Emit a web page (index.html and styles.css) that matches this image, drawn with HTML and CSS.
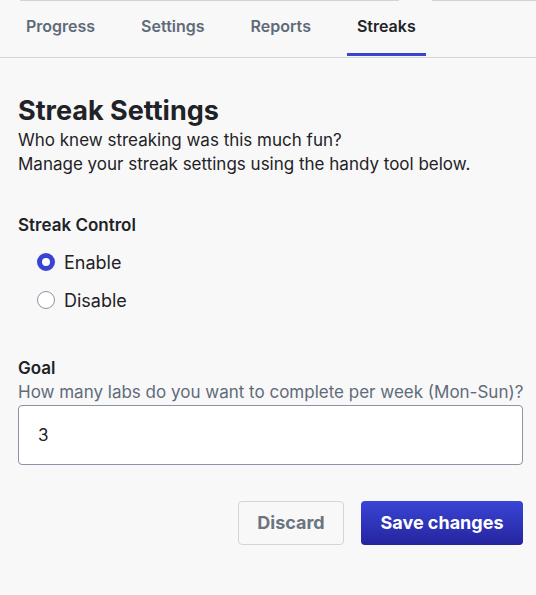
FILE: index.html
```html
<!DOCTYPE html>
<html lang="en">
<head>
  <meta charset="UTF-8">
  <meta name="viewport" content="width=device-width, initial-scale=1.0">
  <title>Streak Settings</title>
  <link rel="stylesheet" href="styles.css">
</head>
<body>
  <div class="top-edge">
    <span class="edge-left"></span>
    <span class="edge-right"></span>
  </div>

  <nav class="tabs">
    <a class="tab" href="#">Progress</a>
    <a class="tab" href="#">Settings</a>
    <a class="tab" href="#">Reports</a>
    <a class="tab active" href="#">Streaks</a>
  </nav>

  <main class="content">
    <h1>Streak Settings</h1>
    <p class="intro">Who knew streaking was this much fun?<br>Manage your streak settings using the handy tool below.</p>

    <section class="field">
      <h2>Streak Control</h2>
      <label class="radio"><input type="radio" name="streak" checked> Enable</label>
      <label class="radio"><input type="radio" name="streak"> Disable</label>
    </section>

    <section class="field goal">
      <h2>Goal</h2>
      <p class="hint">How many labs do you want to complete per week (Mon-Sun)?</p>
      <input class="text-input" type="text" value="3">
    </section>

    <div class="actions">
      <button class="btn btn-secondary">Discard</button>
      <button class="btn btn-primary">Save changes</button>
    </div>
  </main>
</body>
</html>
```

FILE: styles.css
```css
body {
  margin: 0;
  background-color: #f8f8f8;
  font-family: Inter, "Noto Sans", sans-serif;
  color: #1f2226;
}

.top-edge {
  display: flex;
  height: 1px;
}

.edge-left {
  margin-left: 20px;
  width: 379px;
  background: #cfd3de;
}

.edge-right {
  margin-left: 33px;
  flex: 1;
  background: #cfd3de;
}

.tabs {
  display: flex;
  gap: 26px;
  padding: 0 16px;
  border-bottom: 1px solid #d3d5dc;
  margin-top: 12px;
}

.tab {
  padding: 3px 10px 17px;
  border-bottom: 3px solid transparent;
  margin-bottom: 1px;
  font-size: 16px;
  font-weight: 600;
  line-height: 20px;
  color: #5f6b7a;
  text-decoration: none;
}

.tab.active {
  color: #1f2226;
  border-bottom-color: #3a44d0;
}

.content {
  padding: 36px 13px 0 18px;
}

h1 {
  margin: 0;
  font-size: 27px;
  font-weight: 700;
  line-height: 34px;
}

.intro {
  margin: 0;
  font-size: 17px;
  line-height: 24px;
}

.field {
  margin-top: 37px;
}

.field h2 {
  margin: 0 0 6px;
  font-size: 17px;
  font-weight: 600;
  line-height: 24px;
}

.radio {
  display: flex;
  align-items: center;
  gap: 9px;
  margin-left: 19px;
  height: 38px;
  font-size: 18px;
}

.radio input {
  appearance: none;
  box-sizing: border-box;
  margin: 0;
  width: 18px;
  height: 18px;
  border: 1px solid #8a94a4;
  border-radius: 50%;
  background: #fff;
}

.radio input:checked {
  border: 5px solid #3a44d0;
}

.goal {
  margin-top: 37px;
}

.goal h2 {
  margin-bottom: 0;
}

.hint {
  margin: 0 0 1px;
  color: #5f6b7a;
  font-size: 17px;
  line-height: 24px;
  white-space: nowrap;
}

.text-input {
  box-sizing: border-box;
  width: 100%;
  height: 60px;
  padding: 0 19px;
  border: 1px solid #8a94a4;
  border-radius: 4px;
  background: #fff;
  font-family: inherit;
  font-size: 17px;
  color: #1f2226;
}

.actions {
  display: flex;
  justify-content: flex-end;
  gap: 17px;
  margin-top: 36px;
}

.btn {
  height: 44px;
  padding: 0 12px 2px;
  border-radius: 4px;
  font-family: inherit;
  font-size: 18px;
  font-weight: 700;
  cursor: pointer;
}

.btn-secondary {
  width: 106px;
  background: #f8f8f8;
  border: 1px solid #d0d5de;
  color: #6b7480;
}

.btn-primary {
  width: 162px;
  border: none;
  background: linear-gradient(#3a45d6, #24249e);
  color: #fff;
}
```
